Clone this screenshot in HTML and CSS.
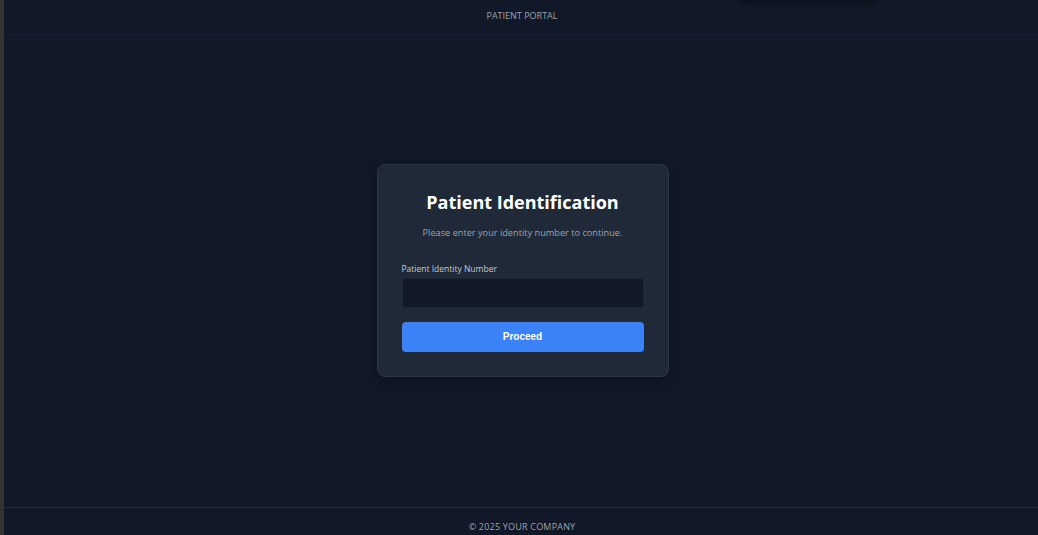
FILE: index.html
```html
<!DOCTYPE html>
<html lang="en">
<head>
<meta charset="utf-8">
<title>Patient Portal</title>
<link rel="stylesheet" href="styles.css">
</head>
<body>
<div class="frame">
  <div class="gutter"></div>
  <div class="app">
    <div class="ghost"></div>
    <header class="topbar">PATIENT PORTAL</header>
    <main class="main">
      <form class="card">
        <h1 class="title">Patient Identification</h1>
        <p class="subtitle">Please enter your identity number to continue.</p>
        <label class="label" for="pid">Patient Identity Number</label>
        <input class="input" id="pid" type="text">
        <button class="button" type="button">Proceed</button>
      </form>
    </main>
    <footer class="footer">© 2025 YOUR COMPANY</footer>
  </div>
</div>
</body>
</html>
```

FILE: styles.css
```css
* { box-sizing: border-box; }
html, body { margin: 0; padding: 0; height: 100%; }
body {
  background: #111827;
  font-family: "Open Sans", "Noto Sans", sans-serif;
  color: #f3f4f6;
  overflow: hidden;
}
.frame { display: flex; height: 535px; }
.gutter { width: 4px; background: #33332f; flex: none; }
.app {
  flex: 1;
  display: flex;
  flex-direction: column;
  position: relative;
  background: #111827;
}
.ghost {
  position: absolute;
  left: 736px;
  top: -20px;
  width: 134px;
  height: 20px;
  box-shadow: 0 2px 6px rgba(0,0,0,0.45);
  background: #0d1320;
}
.topbar {
  height: 35px;
  border-bottom: 1px solid #172032;
  display: flex;
  align-items: center;
  justify-content: center;
  font-size: 9px;
  letter-spacing: 0;
  color: #9ca3af;
  padding-bottom: 3px;
  padding-left: 2px;
}
.main {
  flex: 1;
  display: flex;
  align-items: center;
  justify-content: center;
  padding-left: 3px;
  padding-bottom: 2px;
}
.card {
  width: 292px;
  background: #1f2937;
  border: 1px solid #2d3746;
  border-radius: 8px;
  padding: 24px 24px 24px;
  display: flex;
  flex-direction: column;
  box-shadow: 0 4px 12px rgba(0,0,0,0.25);
}
.title {
  margin: 0;
  text-align: center;
  font-size: 18px;
  font-weight: 700;
  line-height: 26px;
  color: #ffffff;
}
.subtitle {
  margin: 11px 0 0;
  text-align: center;
  font-size: 9.2px;
  color: #9ca3af;
  line-height: 14px;
}
.label {
  margin-top: 23px;
  font-size: 8.5px;
  color: #c3c9d2;
  line-height: 12px;
}
.input {
  margin-top: 3px;
  height: 30px;
  background: #111827;
  border: 1px solid #1c2533;
  border-radius: 4px;
  color: #fff;
  outline: none;
}
.button {
  margin-top: 14px;
  height: 30px;
  background: #3b82f6;
  border: none;
  border-radius: 4px;
  color: #ffffff;
  font-family: "Liberation Sans", Arial, sans-serif;
  font-weight: 700;
  font-size: 10px;
}
.footer {
  height: 28px;
  border-top: 1px solid #263041;
  display: flex;
  align-items: flex-end;
  justify-content: center;
  padding-bottom: 2px;
  padding-left: 2px;
  font-size: 9px;
  letter-spacing: 0.2px;
  color: #9ca3af;
}
```
